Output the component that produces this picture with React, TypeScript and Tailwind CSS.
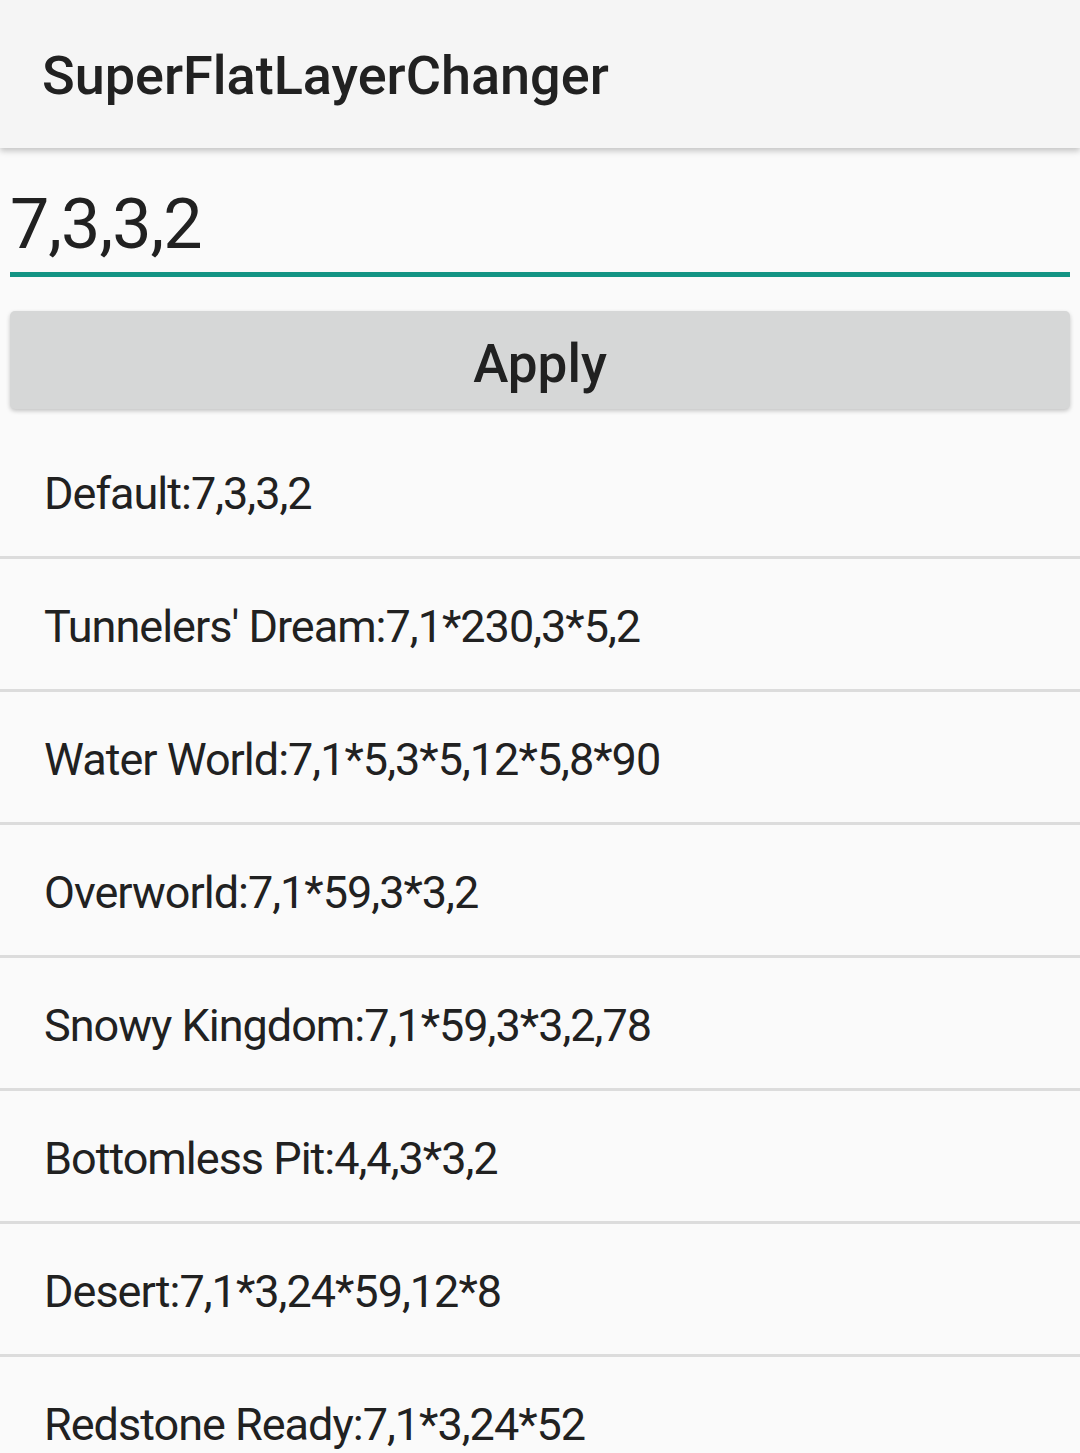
const presets = [
  "Default:7,3,3,2",
  "Tunnelers' Dream:7,1*230,3*5,2",
  "Water World:7,1*5,3*5,12*5,8*90",
  "Overworld:7,1*59,3*3,2",
  "Snowy Kingdom:7,1*59,3*3,2,78",
  "Bottomless Pit:4,4,3*3,2",
  "Desert:7,1*3,24*59,12*8",
  "Redstone Ready:7,1*3,24*52",
];

export default function App() {
  return (
    <div className="h-[1453px] w-[1080px] overflow-hidden bg-[#fafafa] font-['Roboto',sans-serif] text-[#212121]">
      {/* toolbar */}
      <div className="relative z-10 h-[148px] bg-[#f5f5f5] pl-[42px] pt-[49px] shadow-[0_3px_6px_rgba(0,0,0,0.22)]">
        <h1 className="text-[54px] font-medium leading-[54px]">SuperFlatLayerChanger</h1>
      </div>

      {/* layer input */}
      <div className="mx-[10px] mt-[41px]">
        <div className="h-[70px] text-[70px] leading-[70px] tracking-[-1px]">7,3,3,2</div>
        <div className="mt-[13px] h-[5px] bg-[#139484]" />
      </div>

      <button className="mx-[10px] mt-[34px] block h-[98px] w-[1060px] rounded-[5px] bg-[#d6d7d7] pt-[9px] text-center text-[53px] font-medium leading-[53px] text-[#212121] shadow-[0_2px_4px_rgba(0,0,0,0.22)]">
        Apply
      </button>

      {/* preset list */}
      <ul className="mt-[17px]">
        {presets.map((p) => (
          <li key={p} className="border-b-[3px] border-[#dcdcdc]">
            <div className="h-[130px] pl-[44px] pt-[45px] text-[45px] leading-[45px] tracking-[-1px]">{p}</div>
          </li>
        ))}
      </ul>
    </div>
  );
}
